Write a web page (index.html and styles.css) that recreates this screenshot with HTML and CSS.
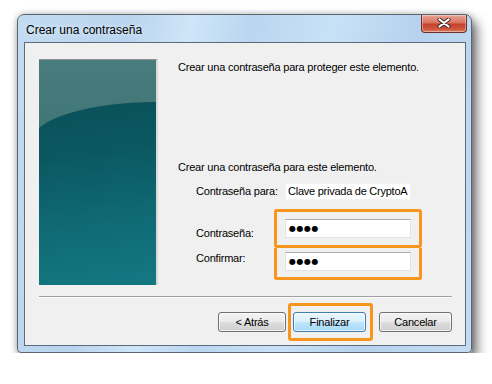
FILE: index.html
```html
<!DOCTYPE html>
<html lang="es">
<head>
    <meta charset="UTF-8">
    <title>Crear una contraseña</title>
    <link rel="stylesheet" href="styles.css">
</head>
<body>
    <div class="window">
        <div class="titlebar">
            <span class="title">Crear una contraseña</span>
            <button class="close" aria-label="Cerrar">
                <svg width="14" height="10" viewBox="0 0 14 10">
                    <path d="M2.5 1.5 L11.5 8.5 M11.5 1.5 L2.5 8.5" stroke="#3b2a2a" stroke-width="4" stroke-linecap="round"/>
                    <path d="M2.5 1.5 L11.5 8.5 M11.5 1.5 L2.5 8.5" stroke="#ffffff" stroke-width="2.2" stroke-linecap="round"/>
                </svg>
            </button>
        </div>

        <div class="client">
            <div class="top">
                <div class="banner"></div>
                <div class="main">
                    <p class="intro">Crear una contraseña para proteger este elemento.</p>
                    <p class="sub">Crear una contraseña para este elemento.</p>

                    <div class="row row-for">
                        <span class="label">Contraseña para:</span>
                        <div class="field readonly">Clave privada de CryptoA</div>
                    </div>

                    <div class="row">
                        <span class="label label-pass">Contraseña:</span>
                        <div class="mark mark-first">
                            <div class="field"><span class="dots">●●●●</span></div>
                        </div>
                    </div>

                    <div class="row">
                        <span class="label label-confirm">Confirmar:</span>
                        <div class="mark mark-second">
                            <div class="field"><span class="dots">●●●●</span></div>
                        </div>
                    </div>
                </div>
            </div>

            <div class="separator"></div>

            <div class="buttons">
                <button class="btn btn-back">&lt; Atrás</button>
                <div class="mark mark-button">
                    <button class="btn btn-default">Finalizar</button>
                </div>
                <button class="btn">Cancelar</button>
            </div>
        </div>
    </div>
</body>
</html>
```

FILE: styles.css
```css
body { margin: 0; padding: 0; background: #ffffff; font-family: "Liberation Sans", Arial, sans-serif; font-size: 11px; letter-spacing: -0.2px; color: #000; }

.window { margin: 14px 0 0 17px; width: 455px; height: 339px; box-sizing: border-box; border: 1px solid #5b6670; border-radius: 7px 7px 4px 4px; background: linear-gradient(100deg, #c2dbf2 0%, #b9d4ee 22%, #cfe5f8 34%, #bad6f0 46%, #c9e1f7 62%, #b6d2ee 78%, #c4dcf3 100%); box-shadow: 5px 7px 12px rgba(0, 0, 0, 0.55), 0 0 6px rgba(0, 0, 0, 0.25); display: flex; flex-direction: column; }

.titlebar { height: 27px; display: flex; align-items: flex-start; justify-content: space-between; padding-left: 8px; }
.title { font-size: 12px; letter-spacing: 0; line-height: 14px; margin-top: 8px; color: #000; text-shadow: 0 0 6px rgba(255, 255, 255, 0.9); }
.close { width: 46px; height: 18px; margin: 0 4px 0 0; padding: 0; border: 1px solid #6b3128; border-top: none; border-radius: 0 0 4px 4px; background: linear-gradient(#e8a595 0%, #d9735f 45%, #c2422b 55%, #cf5a3f 85%, #e28a6c 100%); display: flex; align-items: center; justify-content: center; box-shadow: inset 0 0 0 1px rgba(255, 255, 255, 0.35); }
.close svg { display: block; margin-top: -1px; }

.client { margin: 0 5px 6px 6px; flex: 1; box-sizing: border-box; border: 1px solid #5d6c7a; background: #f0f0f0; padding: 16px 13px 0 14px; }

.top { display: flex; }
.banner { width: 117px; height: 225px; border-top: 1px solid #8c9494; border-right: 2px solid #d9d9d9; position: relative; overflow: hidden; background: linear-gradient(#497c7c 0%, #3b7273 50%, #2f6a6c 100%); }
.banner::before { content: ""; position: absolute; left: -8px; top: 42px; right: 0; bottom: 0; border-top-left-radius: 125px 40px; background: linear-gradient(172deg, #09505a 0%, #0b5862 30%, #0f6a74 65%, #147882 100%); }

.main { margin-left: 20px; flex: 1; }
.main p { margin: 0; line-height: 14px; }
.intro { padding-top: 1px; }
.sub { margin-top: 86px !important; }

.row { display: flex; margin-left: 18px; }
.label { width: 78px; line-height: 14px; }
.row-for { margin-top: 9px; }
.row-for .label { line-height: 17px; width: 89px; }
.label-pass { padding-top: 26px; }
.label-confirm { padding-top: 3px; }

.field { width: 126px; height: 19px; box-sizing: border-box; background: #fff; border: 1px solid #e2e3ea; border-top-color: #abadb3; padding-left: 3px; line-height: 17px; white-space: nowrap; overflow: hidden; }
.readonly { height: 17px; border-color: #f4f4f4; line-height: 15px; padding-left: 2px; letter-spacing: -0.25px; }
.dots { font-family: "DejaVu Sans", sans-serif; font-size: 8px; letter-spacing: 0.5px; vertical-align: top; }

.mark { border: 3px solid #f7961e; border-radius: 3px; }
.mark-first { margin-top: 9px; padding: 7px 8px; }
.mark-second { border-top: none; border-radius: 0 0 3px 3px; padding: 4px 8px 6px; }

.separator { margin-top: 11px; border-top: 1px solid #a0a0a0; border-bottom: 1px solid #ffffff; }

.buttons { display: flex; justify-content: flex-end; align-items: center; height: 20px; margin-top: 14px; }
.btn { height: 20px; width: 73px; padding: 0; font-family: "Liberation Sans", Arial, sans-serif; font-size: 11px; letter-spacing: -0.2px; color: #000; border: 1px solid #707070; border-radius: 3px; background: linear-gradient(#f2f2f2 0%, #ebebeb 50%, #dddddd 51%, #cfcfcf 100%); box-shadow: inset 0 0 0 1px rgba(255, 255, 255, 0.7); }
.btn-back { width: 68px; }
.btn-default { border-color: #3c7fb1; background: linear-gradient(#eaf6fd 0%, #d9f0fc 50%, #bee6fd 51%, #a7d9f5 100%); }
.mark-button { margin: 0 6px 0 2px; padding: 6px 4px 6px 2px; }
```
